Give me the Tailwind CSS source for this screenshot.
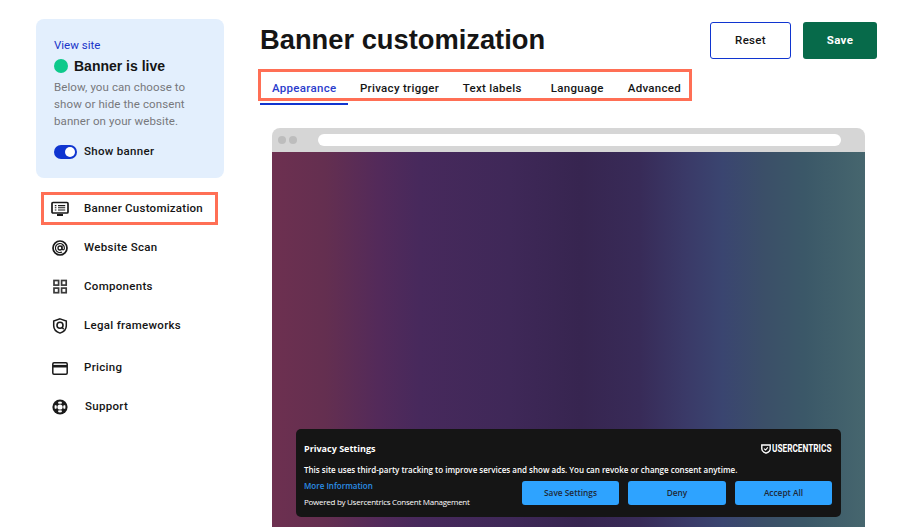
<!DOCTYPE html>
<html lang="en">
<head>
  <meta charset="UTF-8" />
  <meta name="viewport" content="width=device-width, initial-scale=1" />
  <title>Banner customization</title>
  <script src="https://cdn.jsdelivr.net/npm/@tailwindcss/browser@4"></script>
</head>
<body class="bg-white h-[527px] overflow-hidden flex font-['Liberation_Sans',sans-serif] text-[#151515]">
  <!-- Sidebar -->
  <aside class="w-[260px] shrink-0 pl-[36px] pt-[19px]">
    <div class="w-[188px] h-[159px] bg-[#e3effd] rounded-lg pl-[18px] pt-[20px]">
      <a class="block text-[#1a35c9] text-[11.5px] leading-[13px] font-['Roboto',sans-serif]">View site</a>
      <div class="flex items-center gap-[6px] mt-[6px] h-[16px]">
        <span class="w-[14px] h-[14px] rounded-full bg-[#0dc98b]"></span>
        <span class="text-[14px] font-bold">Banner is live</span>
      </div>
      <p class="text-[#77787c] text-[11.5px] leading-[17px] mt-[5px] w-[150px] font-['Roboto',sans-serif] tracking-[0.1px]">Below, you can choose to show or hide the consent banner on your website.</p>
      <div class="flex items-center gap-[7px] mt-[15px] h-[14px]">
        <span class="w-[23px] h-[14px] rounded-full bg-[#1035d0] flex items-center justify-end pr-[2px]">
          <span class="w-[10px] h-[10px] rounded-full bg-white"></span>
        </span>
        <span class="text-[11.5px] font-medium font-['Roboto',sans-serif] tracking-[0.3px]">Show banner</span>
      </div>
    </div>
    <nav class="mt-[14px] w-[182px] text-[11.5px] font-medium font-['Roboto',sans-serif] tracking-[0.3px]">
      <a class="ml-[5px] flex items-center h-[33px] w-[177px] border-[3px] border-[#ff6f55] pl-[7px]">
        <svg class="w-[18px] h-[16px] shrink-0" viewBox="0 0 18 16" fill="none" stroke="#1a1a1a" stroke-width="1.7"><rect x="1" y="1.5" width="16" height="10.5" rx="1"/><path d="M3.8 4.6h1.6M7 4.6h7.2M3.8 6.8h1.6M7 6.8h7.2M3.8 9h1.6M7 9h7.2" stroke-width="1.1"/><path d="M6 14h6" stroke-width="2"/></svg>
        <span class="ml-[15px] tracking-[0.25px]">Banner Customization</span>
      </a>
      <a class="flex items-center h-[20px] mt-[13px] pl-[16px]">
        <svg class="w-[16px] h-[16px] shrink-0" viewBox="0 0 16 16" fill="none" stroke="#1a1a1a"><circle cx="8" cy="8" r="7" stroke-width="1.7"/><circle cx="8" cy="8" r="2" stroke-width="1.3"/><path d="M10 5.6v3c0 1.7 2.4 1.7 2.4-.4A4.5 4.5 0 1 0 10 12" stroke-width="1.2"/></svg>
        <span class="ml-[16px]">Website Scan</span>
      </a>
      <a class="flex items-center h-[20px] mt-[19px] pl-[16px]">
        <svg class="w-[16px] h-[16px] shrink-0" viewBox="0 0 16 16" fill="none" stroke="#3a3a3a" stroke-width="1.7"><rect x="2" y="1.5" width="4.6" height="4.6"/><rect x="9.6" y="1.5" width="4.6" height="4.6"/><rect x="2" y="9.1" width="4.6" height="4.6"/><rect x="9.6" y="9.1" width="4.6" height="4.6"/></svg>
        <span class="ml-[16px]">Components</span>
      </a>
      <a class="flex items-center h-[20px] mt-[19px] pl-[16px]">
        <svg class="w-[16px] h-[16px] shrink-0" viewBox="0 0 16 16" fill="none" stroke="#1a1a1a"><path d="M8 .9l6.3 2.2v4.6c0 3.6-2.6 6.2-6.3 7.4-3.7-1.2-6.3-3.8-6.3-7.4V3.1z" stroke-width="1.5"/><circle cx="8" cy="7.2" r="3" stroke-width="1.6"/><path d="M10.2 9.6l1.5 1.6" stroke-width="1.4"/></svg>
        <span class="ml-[16px]">Legal frameworks</span>
      </a>
      <a class="flex items-center h-[20px] mt-[22px] pl-[16px]">
        <svg class="w-[16px] h-[13px] shrink-0" viewBox="0 0 16 13" fill="none" stroke="#1a1a1a"><rect x=".8" y=".8" width="14.4" height="11.4" rx="1.2" stroke-width="1.5"/><path d="M1 4.2h14" stroke-width="2.6"/></svg>
        <span class="ml-[16px]">Pricing</span>
      </a>
      <a class="flex items-center h-[20px] mt-[19px] pl-[16px]">
        <svg class="w-[16px] h-[16px] shrink-0" viewBox="0 0 16 16"><circle cx="8" cy="8" r="7.6" fill="#1a1a1a"/><circle cx="8" cy="8" r="2.6" fill="#fff"/><path d="M6 2.9a5.4 5.4 0 0 1 4 0l-.7 2a3.2 3.2 0 0 0-2.6 0zM13.1 6a5.4 5.4 0 0 1 0 4l-2-.7a3.2 3.2 0 0 0 0-2.6zM10 13.1a5.4 5.4 0 0 1-4 0l.7-2a3.2 3.2 0 0 0 2.6 0zM2.9 10a5.4 5.4 0 0 1 0-4l2 .7a3.2 3.2 0 0 0 0 2.6z" fill="#fff"/></svg>
        <span class="ml-[17px]">Support</span>
      </a>
    </nav>
  </aside>

  <!-- Main -->
  <main class="flex-1 min-w-0 pt-[22px]">
    <div class="flex items-start justify-between w-[617px] h-[37px]">
      <h1 class="text-[27.3px] leading-[35px] font-bold">Banner customization</h1>
      <div class="flex gap-[12px] text-[11.5px] font-bold font-['Roboto',sans-serif] tracking-[0.3px]">
        <button class="w-[81px] h-[37px] rounded-[3px] border border-[#1035d0] bg-white font-medium">Reset</button>
        <button class="w-[74px] h-[37px] rounded-[3px] bg-[#076a4a] text-white">Save</button>
      </div>
    </div>
    <div class="-ml-[2px] mt-[10px] w-[434px] h-[32px] border-[3px] border-[#ff6f55] pt-[8px] flex items-center relative text-[11.5px] font-medium font-['Roboto',sans-serif] tracking-[0.3px]">
      <span class="ml-[11px] text-[#2a3ccc]">Appearance</span>
      <span class="ml-[23.5px]">Privacy trigger</span>
      <span class="ml-[23.5px]">Text labels</span>
      <span class="ml-[29px]">Language</span>
      <span class="ml-[24px]">Advanced</span>
      <span class="absolute left-[-1px] top-[31px] w-[88px] h-[2px] bg-[#1035d0]"></span>
    </div>

    <!-- Browser mock -->
    <div class="ml-[12px] mt-[27px] w-[593px] h-[399px] rounded-t-lg overflow-hidden flex flex-col">
      <div class="h-[24px] bg-[#d6d6d6] flex items-center pl-[6px] shrink-0">
        <span class="w-[8px] h-[8px] rounded-full bg-[#bdbdbd]"></span>
        <span class="w-[8px] h-[8px] rounded-full bg-[#bdbdbd] ml-[3px]"></span>
        <span class="ml-[21px] w-[523px] h-[12px] rounded-full bg-white"></span>
      </div>
      <div class="flex-1 bg-[linear-gradient(90deg,#6d3050_0%,#642f50_9%,#532a5a_18%,#47295c_25%,#3f2858_40%,#372550_52%,#382b58_62%,#3a3a68_70%,#3a4570_76%,#3b4f68_83%,#3b5868_90%,#46666e_100%)] flex flex-col justify-end items-center pb-[10px]">
        <div class="w-[545px] h-[88px] bg-[#151515] rounded-[5px] pl-[8px] pr-[9px] pt-[12px] text-white font-['Open_Sans',sans-serif]">
          <div class="flex items-center justify-between h-[16px]">
            <span class="text-[9px] font-bold">Privacy Settings</span>
            <span class="flex items-center gap-[1px] w-[71px] text-[11px] font-bold font-['Roboto',sans-serif]">
              <svg class="w-[10px] h-[10px] shrink-0" viewBox="0 0 10 10" fill="none" stroke="#fff" stroke-width="1.4"><path d="M.8 1h8.4v4c0 2-2 3.4-4.2 4.2C2.8 8.4.8 7 .8 5z"/><path d="M3 4.6l1.6 1.4 2.2-2.6" stroke-width="1.1"/></svg>
              <span class="block scale-x-[.75] origin-left whitespace-nowrap">USERCENTRICS</span>
            </span>
          </div>
          <p class="text-[8px] leading-[12px] mt-[7px] font-semibold whitespace-nowrap">This site uses third-party tracking to improve services and show ads. You can revoke or change consent anytime.</p>
          <div class="flex justify-between mt-[5px]">
            <div class="text-[8px] leading-[12px] -mt-[1px]">
              <a class="block text-[#2b8fe6] font-semibold">More Information</a>
              <span class="block mt-[4px] font-normal tracking-[-0.27px]">Powered by Usercentrics Consent Management</span>
            </div>
            <div class="flex gap-[9px] text-[8.3px] font-semibold text-[#1e2a38]">
              <button class="w-[97px] h-[24px] rounded-[3px] bg-[#2ea3ff]">Save Settings</button>
              <button class="w-[98px] h-[24px] rounded-[3px] bg-[#2ea3ff]">Deny</button>
              <button class="w-[97px] h-[24px] rounded-[3px] bg-[#2ea3ff]">Accept All</button>
            </div>
          </div>
        </div>
      </div>
    </div>
  </main>
</body>
</html>
